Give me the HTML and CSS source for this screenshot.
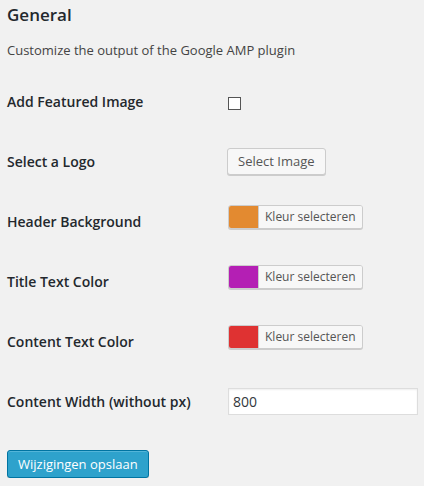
FILE: index.html
```html
<!DOCTYPE html>
<html>
<head>
<meta charset="utf-8">
<link rel="stylesheet" href="styles.css">
</head>
<body>
<div class="wrap">
  <h2 class="title">General</h2>
  <p class="desc">Customize the output of the Google AMP plugin</p>
  <div class="form">
    <div class="row">
      <label class="label">Add Featured Image</label>
      <div class="field"><span class="checkbox"></span></div>
    </div>
    <div class="row">
      <label class="label">Select a Logo</label>
      <div class="field"><button class="btn">Select Image</button></div>
    </div>
    <div class="row">
      <label class="label">Header Background</label>
      <div class="field"><button class="color"><span class="swatch" style="background:#e38a30"></span><span class="ctext">Kleur selecteren</span></button></div>
    </div>
    <div class="row">
      <label class="label">Title Text Color</label>
      <div class="field"><button class="color"><span class="swatch" style="background:#b41fb4"></span><span class="ctext">Kleur selecteren</span></button></div>
    </div>
    <div class="row">
      <label class="label">Content Text Color</label>
      <div class="field"><button class="color"><span class="swatch" style="background:#df3232"></span><span class="ctext">Kleur selecteren</span></button></div>
    </div>
    <div class="row">
      <label class="label">Content Width (without px)</label>
      <div class="field"><div class="input">800</div></div>
    </div>
  </div>
  <button class="primary">Wijzigingen opslaan</button>
</div>
</body>
</html>
```
FILE: styles.css
```css
html, body {
  margin: 0;
  padding: 0;
  background: #f1f1f1;
}
body {
  font-family: "Open Sans", "Liberation Sans", sans-serif;
  color: #444;
  font-size: 13px;
}
.wrap {
  padding: 0 0 0 7px;
  width: 411px;
}
.title {
  margin: 0;
  padding-top: 3px;
  font-size: 17px;
  line-height: 24px;
  font-weight: 600;
  color: #23282d;
}
.desc {
  margin: 13px 0 0 0;
  line-height: 20px;
  font-size: 13px;
  color: #444;
}
.form {
  margin-top: 12px;
}
.row {
  display: flex;
  align-items: center;
  height: 60px;
}
.label {
  width: 221px;
  flex: none;
  font-size: 14px;
  font-weight: 600;
  color: #23282d;
  line-height: 20px;
}
.field {
  flex: 1;
  display: flex;
  align-items: center;
}
.checkbox {
  display: block;
  width: 11px;
  height: 11px;
  border: 1px solid #555;
  background: #fff;
  margin-top: 2px;
}
.btn {
  font-family: "Open Sans", "Liberation Sans", sans-serif;
  font-size: 13px;
  height: 27px;
  margin-left: -1px;
  padding: 0 10px;
  background: #f7f7f7;
  border: 1px solid #ccc;
  border-radius: 3px;
  box-shadow: 0 1px 0 #ccc;
  color: #555;
  line-height: 25px;
  margin-bottom: 1px;
}
.color {
  display: flex;
  align-items: stretch;
  height: 24px;
  padding: 0;
  border: 1px solid #ccc;
  border-radius: 3px;
  background: #f7f7f7;
  box-shadow: 0 1px 0 #ccc;
  margin-bottom: 10px;
  font-family: "Open Sans", "Liberation Sans", sans-serif;
}
.swatch {
  display: block;
  width: 29px;
  border-radius: 2px 0 0 2px;
  border-right: 1px solid #ccc;
}
.ctext {
  display: block;
  padding: 0 6px 0 6px;
  font-size: 12px;
  line-height: 22px;
  color: #555;
  background: #f7f7f7;
  border-radius: 0 2px 2px 0;
}
.input {
  width: 180px;
  height: 25px;
  border: 1px solid #ddd;
  background: #fff;
  box-shadow: inset 0 1px 2px rgba(0,0,0,.07);
  font-size: 14px;
  line-height: 25px;
  padding: 0 4px;
  color: #32373c;
  margin-top: -2px;
}
.primary {
  display: block;
  margin-top: 18px;
  margin-left: 0;
  height: 28px;
  padding: 0 10px;
  background: #2ea2cc;
  border: 1px solid #0074a2;
  border-radius: 3px;
  box-shadow: inset 0 1px 0 rgba(120,200,230,.5), 0 1px 0 rgba(0,0,0,.15);
  color: #fff;
  font-family: "Open Sans", "Liberation Sans", sans-serif;
  font-size: 13px;
  line-height: 26px;
}
```
